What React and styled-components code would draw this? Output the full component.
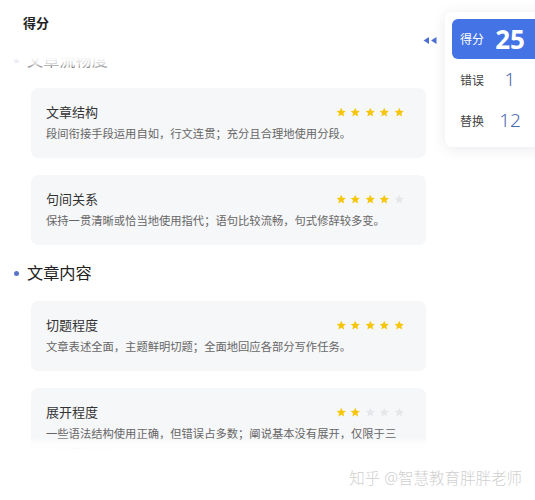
import React from "react";
import styled, { createGlobalStyle } from "styled-components";

const Global = createGlobalStyle`
  html, body { margin: 0; padding: 0; background: #fff; }
  body { font-family: "Noto Sans", "Noto Sans CJK SC", sans-serif; }
  * { box-sizing: border-box; }
`;

const Page = styled.div`
  position: relative;
  width: 535px;
  height: 500px;
  overflow: hidden;
  background: #fff;
`;

const Header = styled.div`
  height: 57px;
  padding: 13px 0 0 23px;
  font-size: 13px;
  line-height: 20px;
  font-weight: 700;
  color: #222;
`;

const Viewport = styled.div`
  position: relative;
  height: 393px;
  overflow: hidden;
`;

const Scroller = styled.div`
  margin-top: -8px;
  padding: 0 109px 0 31px;
`;

const Fade = styled.div`
  position: absolute;
  left: 0;
  right: 0;
  height: ${(p) => p.$h}px;
  ${(p) => (p.$top ? "top: 0;" : "bottom: 0;")}
  background: linear-gradient(
    ${(p) => (p.$top ? "to bottom" : "to top")},
    rgba(255, 255, 255, 1) 0%,
    rgba(255, 255, 255, 0.8) 50%,
    rgba(255, 255, 255, 0.1) 100%
  );
  pointer-events: none;
`;

const SectionTitle = styled.div`
  display: flex;
  align-items: center;
  gap: 8px;
  margin: ${(p) => (p.$first ? "0" : "17px")} 0 17px -17px;
  font-size: 16.2px;
  line-height: 22px;
  color: #222;
  &::before {
    content: "";
    width: 5px;
    height: 5px;
    border-radius: 50%;
    background: #5a74c9;
  }
`;

const Card = styled.div`
  background: #f6f7f9;
  border-radius: 7px;
  padding: 14px 22px 14px 15px;
  & + & {
    margin-top: 17px;
  }
`;

const CardHead = styled.div`
  display: flex;
  justify-content: space-between;
  align-items: center;
  margin-bottom: 2px;
`;

const CardTitle = styled.div`
  font-size: 13px;
  line-height: 20px;
  color: #333;
`;

const CardDesc = styled.div`
  font-size: 11.3px;
  line-height: 20px;
  color: #666;
`;

const Stars = styled.div`
  display: flex;
  gap: 4px;
  margin-top: 1px;
`;

const StarSvg = styled.svg`
  width: 10.5px;
  height: 10.5px;
  display: block;
  fill: ${(p) => (p.$on ? "#f5c60c" : "#e6e7ea")};
`;

const Star = ({ on }) => (
  <StarSvg $on={on} viewBox="0 0 24 24">
    <path d="M12 1.5l3.1 6.9 7.4.7-5.6 5 1.7 7.4L12 17.7l-6.6 3.8 1.7-7.4-5.6-5 7.4-.7z" />
  </StarSvg>
);

const Rating = ({ value }) => (
  <Stars>
    {[0, 1, 2, 3, 4].map((i) => (
      <Star key={i} on={i < value} />
    ))}
  </Stars>
);

const Footer = styled.div`
  margin-top: 18px;
  padding-right: 13px;
  text-align: right;
  font-size: 15.5px;
  line-height: 20px;
  font-weight: 300;
  color: #d0d0d0;
`;

const Dock = styled.div`
  position: absolute;
  top: 12px;
  right: -10px;
  display: flex;
  align-items: flex-start;
  gap: 8px;
`;

const Toggle = styled.svg`
  width: 14px;
  height: 7px;
  margin-top: 24.5px;
  fill: #4d6fd2;
  display: block;
`;

const Panel = styled.div`
  width: 100px;
  background: #fff;
  border-radius: 7px;
  padding: 7px 0 6px 7px;
  box-shadow: 0 2px 14px rgba(40, 50, 80, 0.1);
`;

const Row = styled.div`
  display: grid;
  grid-template-columns: 30px 40px;
  align-items: center;
  height: ${(p) => (p.$active ? 40 : 41)}px;
  padding-left: 8px;
  border-radius: 6px;
  background: ${(p) => (p.$active ? "#4473e6" : "transparent")};
`;

const Label = styled.span`
  font-size: 12px;
  color: ${(p) => (p.$active ? "#fff" : "#444")};
`;

const Num = styled.span`
  text-align: center;
  font-size: ${(p) => (p.$active ? 26 : 19)}px;
  font-weight: ${(p) => (p.$active ? 700 : 300)};
  line-height: 1;
  color: ${(p) => (p.$active ? "#fff" : "#4d6ab2")};
`;

const sections = [
  {
    title: "文章流畅度",
    items: [
      { t: "文章结构", d: "段间衔接手段运用自如，行文连贯；充分且合理地使用分段。", s: 5 },
      { t: "句间关系", d: "保持一贯清晰或恰当地使用指代；语句比较流畅，句式修辞较多变。", s: 4 },
    ],
  },
  {
    title: "文章内容",
    items: [
      { t: "切题程度", d: "文章表述全面，主题鲜明切题；全面地回应各部分写作任务。", s: 5 },
      { t: "展开程度", d: "一些语法结构使用正确，但错误占多数；阐说基本没有展开，仅限于三言两语的简述。", s: 2 },
    ],
  },
];

const scores = [
  { label: "得分", value: "25", active: true },
  { label: "错误", value: "1" },
  { label: "替换", value: "12" },
];

export default function App() {
  return (
    <Page>
      <Global />
      <Header>得分</Header>
      <Viewport>
        <Scroller>
          {sections.map((sec, i) => (
            <React.Fragment key={sec.title}>
              <SectionTitle $first={i === 0}>{sec.title}</SectionTitle>
              {sec.items.map((it) => (
                <Card key={it.t}>
                  <CardHead>
                    <CardTitle>{it.t}</CardTitle>
                    <Rating value={it.s} />
                  </CardHead>
                  <CardDesc>{it.d}</CardDesc>
                </Card>
              ))}
            </React.Fragment>
          ))}
        </Scroller>
        <Fade $top $h={14} />
        <Fade $h={12} />
      </Viewport>
      <Footer>知乎 @智慧教育胖胖老师</Footer>
      <Dock>
        <Toggle viewBox="0 0 14 7">
          <polygon points="6,0 6,7 0.5,3.5" />
          <polygon points="13.5,0 13.5,7 8,3.5" />
        </Toggle>
        <Panel>
          {scores.map((s) => (
            <Row key={s.label} $active={s.active}>
              <Label $active={s.active}>{s.label}</Label>
              <Num $active={s.active}>{s.value}</Num>
            </Row>
          ))}
        </Panel>
      </Dock>
    </Page>
  );
}
